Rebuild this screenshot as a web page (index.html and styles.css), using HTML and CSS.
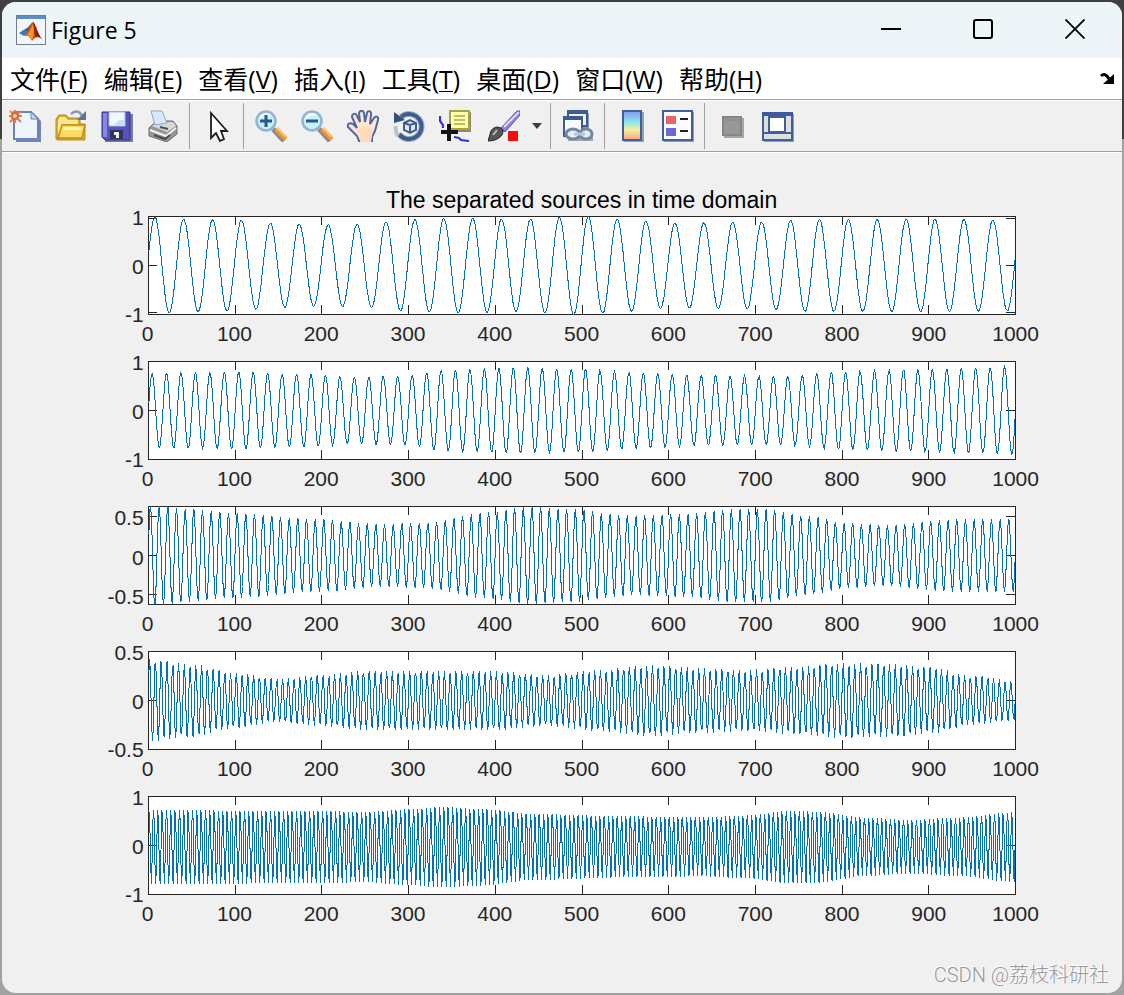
FILE: index.html
```html
<!DOCTYPE html>
<html lang="zh-CN">
<head>
    <meta charset="UTF-8">
    <meta name="viewport" content="width=device-width, initial-scale=1.0">
    <title>Figure 5</title>
    <link rel="stylesheet" href="styles.css">
</head>
<body>
    <div class="window">
        <header class="titlebar">
            <svg class="app-icon" viewBox="0 0 30 30">
                <rect x="0.5" y="0.5" width="29" height="29" fill="#f4f5f6" stroke="#6f7f8f"/>
                <rect x="1" y="1" width="28" height="3" fill="#5c8fc6"/>
                <path d="M3 18 L9 14 L13 17 L8 21 Z" fill="#2f7fc0"/>
                <path d="M9 14 C12 14 14 9 17 7 L13 18 Z" fill="#1f4f80"/>
                <path d="M8 21 C12 17 14 9 17 7 C20 9 21 18 26 24 C22 21 19 22 16 26 C14 21 12 20 8 21 Z" fill="#d9541e"/>
                <path d="M17 7 C20 9 21 18 26 24 C22 21 20 22 19 22 C18 17 18 12 17 7 Z" fill="#8f2416"/>
                <path d="M17 9 C15 14 13 18 11 20 C14 20 15 22 16 25 C18 20 18 14 17 9 Z" fill="#f59a2c"/>
            </svg>
            <h1>Figure 5</h1>
            <div class="window-buttons">
                <button type="button" aria-label="Minimize"><svg viewBox="0 0 20 20"><path d="M0 9H20V11H0Z" fill="#000"/></svg></button>
                <button type="button" aria-label="Maximize"><svg viewBox="0 0 20 20"><rect x="1" y="1" width="18" height="18" rx="2" fill="none" stroke="#000" stroke-width="2"/></svg></button>
                <button type="button" aria-label="Close"><svg viewBox="0 0 20 20"><path d="M0.5 0.5L19.5 19.5M19.5 0.5L0.5 19.5" fill="none" stroke="#000" stroke-width="1.8"/></svg></button>
            </div>
        </header>

        <nav class="menubar">
            <button type="button">文件(<u>F</u>)</button>
            <button type="button">编辑(<u>E</u>)</button>
            <button type="button">查看(<u>V</u>)</button>
            <button type="button">插入(<u>I</u>)</button>
            <button type="button">工具(<u>T</u>)</button>
            <button type="button">桌面(<u>D</u>)</button>
            <button type="button">窗口(<u>W</u>)</button>
            <button type="button">帮助(<u>H</u>)</button>
            <button type="button" class="dock" aria-label="Dock figure">
                <svg viewBox="0 0 14 12"><path d="M1 3C4 0 7 2 9 6" fill="none" stroke="#000" stroke-width="3"/><path d="M14 1V11H3Z" fill="#000"/></svg>
            </button>
        </nav>

        <div class="toolbar">
            <button type="button" aria-label="New figure">
                <svg viewBox="0 0 32 32">
                    <path d="M7 4H25L32 11V32H7Z" fill="#7285ad"/>
                    <path d="M5 2H22L29 9V29H5Z" fill="#eef5ff" stroke="#6a86b8" stroke-width="2"/>
                    <path d="M22 2V9H29Z" fill="#c4d3ec" stroke="#6a86b8"/>
                    <path d="M6 0V13M0 6H13M1 1L12 12M12 1L1 12" stroke="#df8058" stroke-width="2"/>
                    <circle cx="6" cy="6" r="3" fill="#ffd9a0" stroke="#d9673f" stroke-width="2"/>
                </svg>
            </button>
            <button type="button" aria-label="Open">
                <svg viewBox="0 0 32 32">
                    <path d="M1 29V9L4 5H11L14 8H25V14H30V30H3Z" fill="#d9ab32" stroke="#b8891c"/>
                    <path d="M3 25V10L5 7H10L13 10H23V14H9Z" fill="#ffe98c"/>
                    <path d="M7 15H30L27 28H3Z" fill="#fbdc62" stroke="#bd8d1e" stroke-width="1.5"/>
                    <path d="M9 17H27L26 20H8Z" fill="#fff3b0"/>
                    <path d="M16 4C20 0 25 1 27 6" fill="none" stroke="#8497b5" stroke-width="2.5"/>
                    <path d="M31 1V10H22Z" fill="#5c7699"/>
                </svg>
            </button>
            <button type="button" aria-label="Save">
                <svg viewBox="0 0 32 32">
                    <path d="M4 4H32V32H4Z" fill="#777ba2"/>
                    <path d="M1 2H29V30H4L1 27Z" fill="#5552bd" stroke="#343591"/>
                    <path d="M2 3H6V27H2Z" fill="#8987df"/>
                    <path d="M8 2H24V16H8Z" fill="#f1f7ff" stroke="#a8badf"/>
                    <path d="M18 10H24V16H12Z" fill="#ccddf8"/>
                    <path d="M9 20H22V29H9Z" fill="#313557"/>
                    <path d="M13 22H18V28H15V25H13Z" fill="#f0f0f6"/>
                </svg>
            </button>
            <button type="button" aria-label="Print">
                <svg viewBox="0 0 32 32">
                    <path d="M5 15L10 11H26L30 16V24L20 32L2 26V18Z" fill="#969696" stroke="#717171"/>
                    <path d="M5 16L11 12H26L29 16L20 22Z" fill="#d8d8d8"/>
                    <path d="M4 1H15L20 13L8 15Z" fill="#d7e8ff" stroke="#91a5cc"/>
                    <path d="M3 20L19 26L29 18" fill="none" stroke="#f2f2f2" stroke-width="2"/>
                    <path d="M7 25L18 29L23 25" fill="none" stroke="#4c4c4c" stroke-width="2"/>
                    <path d="M13 17L21 19" stroke="#4f4f4f" stroke-width="2"/>
                </svg>
            </button>
            <span class="separator"></span>
            <button type="button" aria-label="Edit plot">
                <svg viewBox="0 0 32 32">
                    <path d="M10 3V28L15 23L19 31L23 29L20 21H26Z" fill="#fff" stroke="#1d1d1d" stroke-width="1.8"/>
                </svg>
            </button>
            <span class="separator"></span>
            <button type="button" aria-label="Zoom in">
                <svg viewBox="0 0 32 32">
                    <path d="M18 19L29 31" stroke="#8a8a92" stroke-width="5"/>
                    <path d="M21 19L31 29" stroke="#e8973a" stroke-width="5"/>
                    <path d="M22 18L31 27" stroke="#ffc476" stroke-width="2"/>
                    <circle cx="11" cy="11" r="9.5" fill="#c5f1fb" stroke="#92b3d3" stroke-width="2.5"/>
                    <path d="M5 9C6 5 10 3 15 5" fill="none" stroke="#fff" stroke-width="2"/>
                    <path d="M11 5V17M5 11H17" stroke="#27578c" stroke-width="3"/>
                </svg>
            </button>
            <button type="button" aria-label="Zoom out">
                <svg viewBox="0 0 32 32">
                    <path d="M18 19L29 31" stroke="#8a8a92" stroke-width="5"/>
                    <path d="M21 19L31 29" stroke="#e8973a" stroke-width="5"/>
                    <path d="M22 18L31 27" stroke="#ffc476" stroke-width="2"/>
                    <circle cx="11" cy="11" r="9.5" fill="#c5f1fb" stroke="#92b3d3" stroke-width="2.5"/>
                    <path d="M5 9C6 5 10 3 15 5" fill="none" stroke="#fff" stroke-width="2"/>
                    <path d="M5 11H17" stroke="#27578c" stroke-width="3"/>
                </svg>
            </button>
            <button type="button" aria-label="Pan">
                <svg viewBox="0 0 32 32">
                    <path d="M12 31L10 26L1 17C0 14 3 12 6 14L10 18L5 7C5 3 9 3 10 6L13 12L12 3C13 0 16 0 17 3L18 12L20 3C21 0 25 1 24 5L23 14L27 8C29 5 32 7 31 10L28 21L25 27V31Z" fill="#ffe5cf" stroke="#4b68a3" stroke-width="2"/>
                    <path d="M13 32V26L10 21L16 17L26 20L24 32Z" fill="#ffdabb"/>
                </svg>
            </button>
            <button type="button" aria-label="Rotate 3D">
                <svg viewBox="0 0 32 32">
                    <path d="M8 7A12.5 12.5 0 1 1 6 24" fill="none" stroke="#9fb0c9" stroke-width="6"/>
                    <path d="M8 7A12.5 12.5 0 1 1 6 24" fill="none" stroke="#3f5c8c" stroke-width="4"/>
                    <path d="M1 2L1 13L12 10Z" fill="#354f7b"/>
                    <path d="M3 16C2 20 3 23 5 26" fill="none" stroke="#b9c2c6" stroke-width="4"/>
                    <path d="M11 13L17 10L23 13V20L17 23L11 20ZM11 13L17 15L23 13M17 15V23" fill="#dce8f3" stroke="#3f5c8c" stroke-width="2"/>
                </svg>
            </button>
            <button type="button" aria-label="Data cursor">
                <svg viewBox="0 0 32 32">
                    <path d="M12 2H32V22H12Z" fill="#8c8c6c"/>
                    <path d="M11 1H30V19H11Z" fill="#ffffa8" stroke="#a5a443" stroke-width="2"/>
                    <path d="M15 6H26M15 10H26M15 14H26" stroke="#a8a65c" stroke-width="1.5"/>
                    <path d="M1 6V11L4 15V18M15 27L20 28L22 30L30 31" fill="none" stroke="#3832d8" stroke-width="2.2"/>
                    <path d="M10 14V31M2 22H19" stroke="#151515" stroke-width="4"/>
                </svg>
            </button>
            <div class="split">
                <button type="button" aria-label="Brush">
                    <svg viewBox="0 0 32 32">
                        <path d="M13 18L29 1H32V5L17 22Z" fill="#8b83dc" stroke="#5652a5"/>
                        <path d="M16 17L31 2" stroke="#dcdaff" stroke-width="2"/>
                        <path d="M0 31L3 21C6 16 12 16 15 20C16 26 9 31 0 31Z" fill="#555" stroke="#252525"/>
                        <path d="M5 25L9 20" stroke="#bdbdbd" stroke-width="2"/>
                        <rect x="20" y="21" width="10" height="10" fill="#f70a0a"/>
                    </svg>
                </button>
                <button type="button" class="caret" aria-label="Brush colour">
                    <svg viewBox="0 0 10 6"><path d="M0 0H10L5 6Z" fill="#3d3d3d"/></svg>
                </button>
            </div>
            <span class="separator"></span>
            <button type="button" aria-label="Link plot">
                <svg viewBox="0 0 32 32">
                    <path d="M7 3H27V18H7Z" fill="#8999b8"/>
                    <path d="M6 1H25V16H6Z" fill="#eef5ff" stroke="#3e5c93" stroke-width="2"/>
                    <path d="M5 0H26V4H5Z" fill="#3e5c93"/>
                    <path d="M2 7H20V26H2Z" fill="#f8fbff" stroke="#3e5c93" stroke-width="2"/>
                    <path d="M1 6H21V10H1Z" fill="#3e5c93"/>
                    <path d="M6 31H31V27H6Z" fill="#a2a8ae"/>
                    <ellipse cx="11" cy="24" rx="7" ry="5" fill="#e5edf3" stroke="#7188a5" stroke-width="3"/>
                    <ellipse cx="24" cy="24" rx="6" ry="5" fill="#e5edf3" stroke="#7188a5" stroke-width="3"/>
                    <path d="M12 24H23" stroke="#b5c7da" stroke-width="3"/>
                </svg>
            </button>
            <span class="separator"></span>
            <button type="button" aria-label="Insert colorbar">
                <svg viewBox="0 0 32 32">
                    <defs>
                        <linearGradient id="bar" x1="0" y1="0" x2="0" y2="1">
                            <stop offset="0" stop-color="#8795ef"/>
                            <stop offset="0.35" stop-color="#86e3f2"/>
                            <stop offset="0.65" stop-color="#f4efa0"/>
                            <stop offset="1" stop-color="#f4a486"/>
                        </linearGradient>
                    </defs>
                    <path d="M8 2H28V32H8Z" fill="#95a0b0"/>
                    <rect x="7" y="1" width="18" height="29" fill="url(#bar)" stroke="#435f99" stroke-width="2"/>
                </svg>
            </button>
            <button type="button" aria-label="Insert legend">
                <svg viewBox="0 0 32 32">
                    <path d="M2 2H32V32H2Z" fill="#929dac"/>
                    <rect x="1" y="1" width="29" height="29" fill="#fafcff" stroke="#425e99" stroke-width="2"/>
                    <rect x="4" y="6" width="10" height="8" fill="#e56666"/>
                    <rect x="4" y="18" width="10" height="8" fill="#6a68de"/>
                    <path d="M18 9H26M18 21H26" stroke="#222" stroke-width="2"/>
                </svg>
            </button>
            <span class="separator"></span>
            <button type="button" aria-label="Hide plot tools">
                <svg viewBox="0 0 32 32">
                    <path d="M8 8H28V28H8Z" fill="#a5a5a5"/>
                    <rect x="7" y="7" width="18" height="18" fill="#989898" stroke="#858585" stroke-width="2"/>
                    <path d="M7 10H25" stroke="#858585" stroke-width="1"/>
                </svg>
            </button>
            <button type="button" aria-label="Show plot tools">
                <svg viewBox="0 0 32 32">
                    <path d="M2 4H32V32H2Z" fill="#939ca9"/>
                    <rect x="1" y="3" width="29" height="27" fill="#dcdfdb" stroke="#425e99" stroke-width="2"/>
                    <path d="M0 2H31V6H0Z" fill="#3f59a0"/>
                    <rect x="7" y="7" width="16" height="15" fill="#fff" stroke="#425e99" stroke-width="2"/>
                    <path d="M1 23H30" stroke="#425e99" stroke-width="2"/>
                </svg>
            </button>
        </div>

        <main class="figure">
            <h2>The separated sources in time domain</h2>
            <div id="plots"></div>
            <p class="watermark">CSDN @荔枝科研社</p>
        </main>
    </div>

    <script src="plots.js"></script>
</body>
</html>
```
FILE: styles.css
```css
* {
    box-sizing: border-box;
}

body {
    margin: 0;
    padding: 2px;
    min-height: 100vh;
    display: flex;
    background: linear-gradient(#404040 14%, #a2a2a2 14%);
    font-family: "Open Sans", "Noto Sans CJK SC", sans-serif;
    color: #000;
}

.window {
    flex: 1;
    display: flex;
    flex-direction: column;
    min-width: 0;
    border-radius: 14px;
    overflow: hidden;
    background-color: #f0f0f0;
}

button {
    display: flex;
    align-items: center;
    justify-content: center;
    padding: 0;
    border: none;
    background: none;
    color: inherit;
    font: inherit;
}

/* title bar */
.titlebar {
    display: flex;
    align-items: center;
    height: 56px;
    padding-left: 14px;
    background-color: #edf5f8;
}

.app-icon {
    width: 30px;
    height: 30px;
}

h1 {
    margin: 0 0 0 5px;
    font-size: 23px;
    font-weight: normal;
    line-height: 30px;
}

.window-buttons {
    display: flex;
    height: 54px;
    margin-left: auto;
    margin-right: 1px;
    align-self: flex-start;
}

.window-buttons button {
    width: 92px;
}

.window-buttons svg {
    width: 20px;
    height: 20px;
}

/* menu bar */
.menubar {
    display: flex;
    align-items: center;
    gap: 16px;
    height: 41px;
    padding: 0 8px;
    background-color: #fff;
    font-size: 25px;
    line-height: 32px;
}

.menubar button {
    white-space: nowrap;
}

.menubar u {
    text-decoration-thickness: 1px;
    text-underline-offset: 2px;
}

.menubar .dock {
    margin-left: auto;
}

.dock svg {
    width: 14px;
    height: 12px;
}

/* toolbar */
.toolbar {
    display: flex;
    height: 54px;
    border-top: 1px solid #a0a0a0;
    border-bottom: 1px solid #fff;
    box-shadow: inset 0 1px #fff, inset 0 -1px #a0a0a0;
}

.toolbar button {
    width: 46px;
    height: 51px;
}

.toolbar svg {
    width: 32px;
    height: 32px;
}

.separator {
    width: 1px;
    height: 46px;
    margin: 3px 4px 0 3px;
    background-color: #a0a0a0;
}

.split {
    display: flex;
    padding-left: 3px;
}

.toolbar .caret {
    width: 20px;
}

.toolbar .caret svg {
    width: 10px;
    height: 6px;
}

/* figure */
.figure {
    flex: 1;
    padding: 32px 0 2px;
    font-family: "Liberation Sans", Arial, sans-serif;
}

h2 {
    margin: 0 9.5% 0 13%;
    font-size: 23px;
    font-weight: normal;
    line-height: 31px;
    text-align: center;
}

#plots {
    padding: 0 9.5% 0 calc(13% - 60px);
}

.plot {
    display: grid;
    grid-template-columns: 60px 1fr;
    grid-template-rows: 99px 46px;
    color: #262626;
    font-size: 21px;
    line-height: 24px;
}

.plot svg {
    display: block;
    width: 100%;
    height: 99px;
    shape-rendering: crispEdges;
}

.plot ol {
    display: flex;
    justify-content: space-between;
    margin: 0;
    padding: 0;
    list-style: none;
}

.plot .y-labels {
    flex-direction: column;
    align-items: flex-end;
    padding: 2px 4px 0 0;
}

.plot .y-labels.inset {
    padding: 12px 4px 8px 0;
}

.y-labels li {
    display: flex;
    align-items: center;
    height: 0;
}

.plot .x-labels {
    grid-column: 2;
    padding-top: 7px;
}

.x-labels li {
    display: flex;
    justify-content: center;
    width: 0;
}

.box {
    fill: none;
    stroke: #262626;
}

.signal {
    fill: none;
    stroke: #0072bd;
    stroke-width: 1;
}

.watermark {
    margin: 18px 13px 0 0;
    color: #999;
    font-family: Roboto, "Noto Sans CJK SC", sans-serif;
    font-size: 20px;
    font-weight: 300;
    line-height: 32px;
    text-align: right;
    text-shadow: -1px -1px #fff;
}
```
FILE: plots.js
```js
// freq is in cycles per sample, env holds [sample, amplitude] pairs
const plots = [
    {
        freq: 0.03, phase: 0.1, limit: 1.04, ticks: [1, 0, -1],
        env: [[0, 1.02], [50, 0.98], [100, 0.96], [150, 0.89], [200, 0.86], [250, 0.88], [300, 0.97], [350, 1], [430, 0.98], [500, 1.04], [550, 0.98], [600, 0.9], [700, 0.92], [770, 0.98], [830, 0.97], [900, 0.98], [1000, 0.96]]
    },
    {
        freq: 0.06, phase: -0.2, limit: 1, ticks: [1, 0, -1],
        env: [[0, 0.76], [100, 0.78], [180, 0.74], [240, 0.68], [290, 0.7], [350, 0.83], [430, 0.87], [500, 0.84], [580, 0.76], [650, 0.71], [730, 0.7], [800, 0.79], [870, 0.83], [950, 0.86], [1000, 0.9]]
    },
    {
        freq: 0.1, phase: -0.2, limit: 0.63, ticks: [0.5, 0, -0.5],
        env: [[0, 0.66], [50, 0.59], [100, 0.54], [200, 0.46], [270, 0.4], [320, 0.42], [390, 0.55], [440, 0.62], [480, 0.6], [560, 0.51], [620, 0.53], [670, 0.59], [710, 0.6], [760, 0.5], [810, 0.41], [850, 0.39], [930, 0.46], [1000, 0.46]]
    },
    {
        freq: 0.15, phase: -0.2, limit: 0.5, ticks: [0.5, 0, -0.5],
        env: [[0, 0.42], [50, 0.37], [100, 0.28], [150, 0.22], [200, 0.26], [250, 0.3], [400, 0.3], [460, 0.26], [520, 0.31], [580, 0.36], [640, 0.33], [690, 0.31], [740, 0.34], [800, 0.38], [860, 0.37], [900, 0.34], [950, 0.25], [1000, 0.2]]
    },
    {
        freq: 0.2, phase: -0.14, limit: 1, ticks: [1, 0, -1],
        env: [[0, 0.79], [200, 0.77], [250, 0.75], [300, 0.81], [340, 0.86], [380, 0.82], [450, 0.7], [550, 0.65], [640, 0.63], [690, 0.67], [740, 0.77], [770, 0.76], [830, 0.62], [880, 0.57], [930, 0.62], [1000, 0.74]]
    }
];

const H = 98;

function amplitude(env, n) {
    let i = 1;
    while (env[i][0] < n) i++;
    const [x0, a0] = env[i - 1];
    const [x1, a1] = env[i];
    const t = (1 - Math.cos(Math.PI * (n - x0) / (x1 - x0))) / 2;
    return a0 + (a1 - a0) * t;
}

function drawPlot(svg, plot) {
    const W = Math.round(svg.clientWidth) - 1;
    const px = n => 0.5 + Math.round(n / 1000 * W);
    const py = v => 0.5 + Math.round(H / 2 * (1 - Math.max(-1, Math.min(1, v / plot.limit))));

    let box = `M0.5 0.5H${W + 0.5}V${H + 0.5}H0.5Z`;
    for (let n = 100; n < 1000; n += 100) {
        box += `M${px(n)} 0V9M${px(n)} ${H}V${H - 9}`;
    }
    plot.ticks.forEach(v => {
        box += `M0 ${py(v)}H9M${W} ${py(v)}H${W - 9}`;
    });

    // samples keep their exact x, only the axes snap to pixels
    const points = [];
    for (let n = 1; n <= 1000; n++) {
        const v = amplitude(plot.env, n) * Math.sin(2 * Math.PI * plot.freq * n + plot.phase);
        points.push((n / 1000 * W).toFixed(2) + ',' + py(v));
    }

    svg.innerHTML = `<rect width="${W + 1}" height="${H + 1}" fill="#fff"/>
        <path class="box" d="${box}"/>
        <polyline class="signal" points="${points.join(' ')}"/>`;
}

plots.forEach(plot => {
    const div = document.createElement('div');
    div.className = 'plot';

    let xLabels = '';
    for (let n = 0; n <= 1000; n += 100) {
        xLabels += `<li>${n}</li>`;
    }
    const yLabels = plot.ticks.map(v => `<li>${v}</li>`).join('');
    const inset = plot.limit === 0.63 ? ' inset' : '';

    div.innerHTML = `<ol class="y-labels${inset}">${yLabels}</ol>
        <svg></svg>
        <ol class="x-labels">${xLabels}</ol>`;
    document.getElementById('plots').appendChild(div);
    plot.svg = div.querySelector('svg');
});

function drawAll() {
    plots.forEach(plot => drawPlot(plot.svg, plot));
}

window.addEventListener('resize', drawAll);
drawAll();
```
